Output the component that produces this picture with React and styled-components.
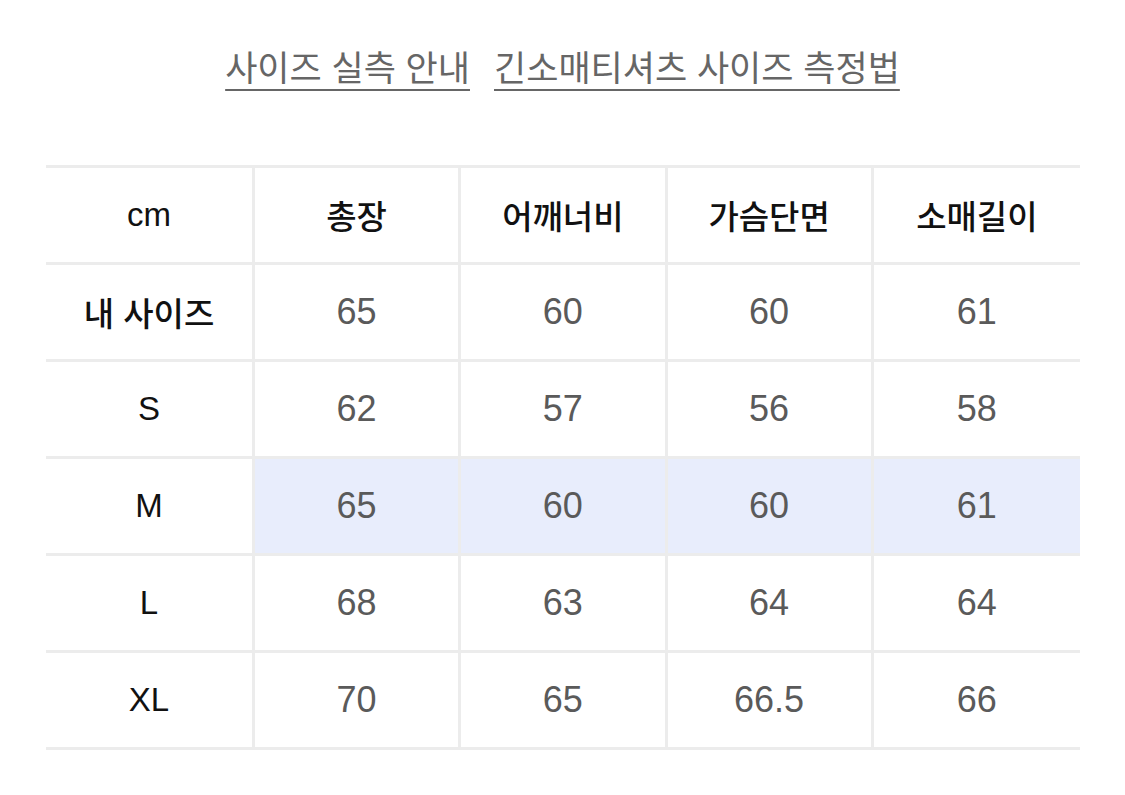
import React from 'react';
import styled, { createGlobalStyle } from 'styled-components';

const GlobalStyle = createGlobalStyle`
  body {
    margin: 0;
    background: #ffffff;
    font-family: "Liberation Sans", "Noto Sans CJK KR", sans-serif;
  }
`;

const Page = styled.div`
  width: 1125px;
  padding-top: 46px;
`;

const Links = styled.div`
  display: flex;
  justify-content: center;
  gap: 24px;
  margin-bottom: 73px;
`;

const GuideLink = styled.a`
  font-size: 35px;
  line-height: 46px;
  color: #666666;
  text-decoration: underline;
  text-decoration-thickness: 2px;
  text-underline-offset: 8px;
  cursor: pointer;
`;

const Table = styled.div`
  display: grid;
  grid-template-columns: 209px repeat(4, 1fr);
  margin: 0 45px 0 46px;
  border-top: 3px solid #ececec;
`;

const Cell = styled.div`
  height: 94px;
  display: flex;
  align-items: center;
  justify-content: center;
  border-bottom: 3px solid #ececec;
  border-right: ${p => (p.$last ? 'none' : '3px solid #ececec')};
  background: ${p => (p.$active ? '#e8edfc' : '#ffffff')};
  font-size: ${p => (p.$head ? '33px' : '36px')};
  font-weight: ${p => (p.$head ? 500 : 400)};
  color: ${p => (p.$head ? '#111111' : '#5a5a5a')};
`;

const columns = ['cm', '총장', '어깨너비', '가슴단면', '소매길이'];

const rows = [
  { label: '내 사이즈', values: ['65', '60', '60', '61'] },
  { label: 'S', values: ['62', '57', '56', '58'] },
  { label: 'M', values: ['65', '60', '60', '61'], active: true },
  { label: 'L', values: ['68', '63', '64', '64'] },
  { label: 'XL', values: ['70', '65', '66.5', '66'] },
];

export default function App() {
  return (
    <Page>
      <GlobalStyle />
      <Links>
        <GuideLink>사이즈 실측 안내</GuideLink>
        <GuideLink>긴소매티셔츠 사이즈 측정법</GuideLink>
      </Links>
      <Table>
        {columns.map((c, i) => (
          <Cell key={c} $head $last={i === columns.length - 1}>{c}</Cell>
        ))}
        {rows.map(row => (
          <React.Fragment key={row.label}>
            <Cell $head>{row.label}</Cell>
            {row.values.map((v, i) => (
              <Cell key={i} $active={row.active} $last={i === row.values.length - 1}>{v}</Cell>
            ))}
          </React.Fragment>
        ))}
      </Table>
    </Page>
  );
}
